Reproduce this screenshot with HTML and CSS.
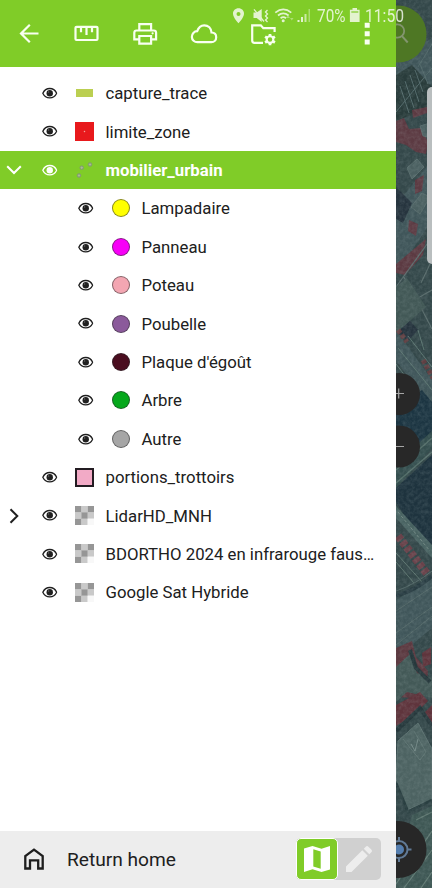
FILE: index.html
```
<!DOCTYPE html>
<html lang="fr">
<head>
<meta charset="utf-8">
<title>Layers</title>
<link rel="stylesheet" href="styles.css">
</head>
<body>
<svg class="defs" width="0" height="0">
  <symbol id="eye" viewBox="0 0 15 12">
    <path d="M.8 6C3.700-.1 11.300-.1 14.200 6 11.300 12.100 3.700 12.100.8 6Z" fill="none" stroke="currentColor" stroke-width="1.300"/>
    <circle cx="7.500" cy="6" r="3.100" fill="currentColor"/>
    <circle cx="6.400" cy="4.800" r=".7" fill="#fff" opacity=".3"/>
  </symbol>
  <symbol id="raster" viewBox="0 0 19 19">
    <path fill="#c9c9c9" d="M6.300 0h6.400v6.300H6.300zM0 6.300h6.300v6.400H0zM12.700 6.300H19v6.400h-6.300zM6.300 12.700h6.400V19H6.300z"/>
    <path fill="#969696" d="M0 0h6.300v6.300H0zM12.700 0H19v6.300h-6.300zM6.300 6.300h6.400v6.400H6.300zM0 12.700h6.300V19H0z"/>
    <path fill="#f8f8f8" d="M12.700 12.700H19V19h-6.300z"/>
  </symbol>
</svg>
<div class="screen">
  <main class="drawer">
    <header class="toolbar">
      <svg viewBox="0 0 396 67" fill="none" stroke="#f8fff0" stroke-width="2.200">
        <path d="M38.500 33.500H21M29.800 24.700 21 33.500l8.800 8.800"/>
        <rect x="75.500" y="26.800" width="22" height="13.200" rx="1"/>
        <path d="M81 27v5.300M86.500 27v8M92 27v5.300"/>
        <path d="M139.300 30.500v-6.300h11.800v6.300M139 39.300h-4.700v-6.500q0-2.300 2.300-2.300h17.200q2.300 0 2.300 2.300v6.500h-4.700M139.300 36h11.800v7.600h-11.800z"/>
        <circle cx="152.600" cy="33.300" r="1.100" fill="#f8fff0" stroke="none"/>
        <path d="M197.500 42.200a5.500 5.500 0 0 1-.3-11c1.200-3.600 3.700-5.900 7-5.900 4.100 0 7 3 7.300 7.200 2.900.1 4.700 2.100 4.700 4.700 0 2.900-2 5-4.900 5z"/>
        <path d="M263 42.800h-8.500q-2.300 0-2.300-2.300V25.300h8.600l2.500 2.900h11.300v3.700"/>
        <circle cx="270" cy="39.600" r="3.300" stroke-width="2.100"/>
        <path stroke-width="2.700" d="M270 36.400v-2.500M270 42.800v2.500M267.200 38l-2.100-1.300M272.800 41.200l2.100 1.300M267.200 41.200l-2.100 1.300M272.800 38l2.100-1.300"/>
        <path fill="#f8fff0" stroke="none" d="M364.700 22.800h5v5h-5zM364.700 31.200h5v5h-5zM364.700 39.600h5v5h-5z"/>
      </svg>
    </header>
    <div class="layers">
      <div class="row"><span class="toggle"></span><svg class="eye"><use href="#eye"/></svg><span class="legend"><i class="line"></i></span><span class="name">capture_trace</span></div>
      <div class="row"><span class="toggle"></span><svg class="eye"><use href="#eye"/></svg><span class="legend"><i class="zone"></i></span><span class="name">limite_zone</span></div>
      <div class="row selected"><span class="toggle"><svg width="16" height="10" viewBox="0 0 16 10"><path d="M1.200 1.200 8 8l6.800-6.800"/></svg></span><svg class="eye"><use href="#eye"/></svg><span class="legend"><svg width="19" height="19" viewBox="0 0 19 19" fill="#a9bf8d" stroke="#7f9378" stroke-width="1"><circle cx="4" cy="14.500" r="1.700"/><circle cx="6.700" cy="6.700" r="1.700"/><circle cx="15" cy="3.500" r="1.700"/></svg></span><span class="name">mobilier_urbain</span></div>
      <div class="row child"><svg class="eye"><use href="#eye"/></svg><span class="legend"><i class="dot lamp"></i></span><span class="name">Lampadaire</span></div>
      <div class="row child"><svg class="eye"><use href="#eye"/></svg><span class="legend"><i class="dot sign"></i></span><span class="name">Panneau</span></div>
      <div class="row child"><svg class="eye"><use href="#eye"/></svg><span class="legend"><i class="dot post"></i></span><span class="name">Poteau</span></div>
      <div class="row child"><svg class="eye"><use href="#eye"/></svg><span class="legend"><i class="dot bin"></i></span><span class="name">Poubelle</span></div>
      <div class="row child"><svg class="eye"><use href="#eye"/></svg><span class="legend"><i class="dot drain"></i></span><span class="name">Plaque d'égoût</span></div>
      <div class="row child"><svg class="eye"><use href="#eye"/></svg><span class="legend"><i class="dot tree"></i></span><span class="name">Arbre</span></div>
      <div class="row child"><svg class="eye"><use href="#eye"/></svg><span class="legend"><i class="dot other"></i></span><span class="name">Autre</span></div>
      <div class="row"><span class="toggle"></span><svg class="eye"><use href="#eye"/></svg><span class="legend"><i class="area"></i></span><span class="name">portions_trottoirs</span></div>
      <div class="row"><span class="toggle"><svg width="10" height="16" viewBox="0 0 10 16"><path d="M1.500 1.200 8.300 8l-6.800 6.800"/></svg></span><svg class="eye"><use href="#eye"/></svg><svg class="raster"><use href="#raster"/></svg><span class="name">LidarHD_MNH</span></div>
      <div class="row"><span class="toggle"></span><svg class="eye"><use href="#eye"/></svg><svg class="raster"><use href="#raster"/></svg><span class="name">BDORTHO 2024 en infrarouge faus…</span></div>
      <div class="row"><span class="toggle"></span><svg class="eye"><use href="#eye"/></svg><svg class="raster"><use href="#raster"/></svg><span class="name">Google Sat Hybride</span></div>
    </div>
    <footer class="bottom">
      <svg class="home" width="20" height="22" viewBox="0 0 20 22" fill="none" stroke="#1e1e1e" stroke-width="2.300"><path d="M1.300 20.500V8L10 1.600 18.700 8v12.500h-4.500v-8.200H6v8.200z"/></svg>
      <span class="return">Return home</span>
      <div class="modes">
        <span class="mode browse"><svg width="26" height="26" viewBox="0 0 26 26"><path fill="#fff" d="M0 2.500 8.500 0l9 2.700L26 0v23.500L17.500 26l-9-2.700L0 26z"/><path fill="#80cc28" d="M9.300 3.200 16.700 5.400v17.400l-7.400-2.200z"/></svg></span>
        <span class="mode edit"><svg width="26" height="26" viewBox="0 0 26 26" fill="#ededed"><path d="M0 26v-5.500L16.300 4.200l5.500 5.500L5.500 26zM17.800 2.700l2-2q1.300-1.300 2.600 0l2.900 2.900q1.300 1.300 0 2.600l-2 2z"/></svg></span>
      </div>
    </footer>
  </main>
  <svg class="map" viewBox="396 0 36 888" fill="none">
    <filter id="grain" x="0" y="0" width="100%" height="100%">
      <feTurbulence type="fractalNoise" baseFrequency=".28" numOctaves="3" seed="4"/>
      <feColorMatrix values="0 0 0 0 .5  0 0 0 0 .6  0 0 0 0 .6  1.500 0 0 0 -.5"/>
    </filter>
    <rect x="396" width="36" height="888" fill="#34484a"/>
    <g class="aerial">
    <path fill="#40565a" d="M396 60 432 38v44l-36 50zM396 205l36-45v60l-36 55zM396 600l36-22v50l-36 30zM396 330l36 50v30l-36-50z"/>
    <path fill="#293c3b" d="M396 75 412 65l20 22v20l-36 14z"/>
    <path stroke="#52696a" stroke-width="1" d="M396 112 432 68M400 86l9 27M405 81l9 27M410 75l9 27M415 70l8 22M420 64l8 20M396 62l18-18M418 67l14-23"/>
    <path fill="#5c3a42" d="M396 121l8-3 5 11 12-1 7 14-2 12-10-2-10-7-10-3zM412 110l15-3v6l-14 5zM409 220l9 4-2 12-8-5zM396 264l30-25-3 16-18 20-9-2zM415 180l9-5-2 16-7 3z"/>
    <path fill="#4b6061" stroke="#5c7070" stroke-width=".8" d="M407 168l10-9 7 8-12 12zM411 207l11-14 8 4-10 17zM420 126l10-3 2 15-9-2z"/>
    <path fill="#26343e" d="M396 187l16 16-9 20-7-4zM396 320l10-4 12 14-10 11-12-9z"/>
    <path stroke="#586b6b" stroke-width="1.200" d="M396 287 430 240M403 276l15 22 14-8M404 286l-6 42M421 283l9-19M417 300l15 29"/>
    <path fill="#425856" d="M407 278l19 29-30 26v-46z"/>
    <path stroke="#603f42" stroke-width="5" stroke-dasharray="4 2" d="M398 330l9 12M423 360l10 18"/>
    <path stroke="#5a746f" stroke-width="1" d="M398 348 432 390M408 336l24 31M396 364l36 47M418 330l6 20"/>
    <path fill="#1c3542" d="M396 410 422 390l10 12v30l-36 48z"/>
    <path fill="#354f4f" d="M396 464 432 431v17l-36 40z"/>
    <path stroke="#546e69" stroke-width="1.500" d="M396 470 432 438M396 483 432 452"/>
    <path fill="#1e333e" d="M396 488 432 455v91l-18-14-18-30z"/>
    <path fill="#486261" d="M396 506 432 545v13l-36-40z"/>
    <path stroke="#718883" stroke-width="1" stroke-dasharray="3 2" d="M398 512 430 551"/>
    <path stroke="#69424a" stroke-width="8" stroke-dasharray="5 2" d="M398 536 428 575"/>
    <path stroke="#5d756f" stroke-width="1" d="M396 553 423 583M396 562l18 21"/>
    <path stroke="#293d43" stroke-width="4" d="M396 596q20-6 36-20"/>
    <path stroke="#526767" stroke-width="1" d="M396 591q20-7 36-20M396 611 432 587M396 633l36-26M396 645 432 616"/>
    <path fill="#5c3940" d="M396 648l16-7 4 16 12 14-2 20-14 7-16-1z"/>
    <path fill="#435957" d="M396 667l14-13 7 19 15 5v20l-25-6-11 10z"/>
    <path fill="#5f343c" d="M396 705l24-13 8 9-13 13-19 12zM422 653l9-6v17l-8 3zM423 714l9-9v20z"/>
    <path stroke="#26383c" stroke-width="4" d="M396 731 420 708 432 726M410 650l6 18 14 14"/>
    <path fill="#4d6362" stroke="#5c7170" stroke-width="1" d="M398 741 418 723 432 749v50l-25 11-11-31z"/>
    <path stroke="#748987" stroke-width="1" d="M411 744l4 7 3-12"/>
    <path stroke="#5f7573" stroke-width="1" d="M403 739l17 21 6-8-12-21"/>
    <path stroke="#2a3f41" stroke-width="3" d="M396 783l12 29 24-12M419 826l13-8"/>
    <path fill="#3e5754" d="M412 815 432 806v82h-36v-12z"/>
    <path stroke="#617a73" stroke-width="1.200" d="M396 884 432 831M404 888l28-38M416 820l16-8M421 888l11-16"/>
    </g>
    <rect x="396" width="36" height="888" filter="url(#grain)" opacity=".18"/>
    <circle cx="398" cy="34" r="28.500" fill="#4e7724"/>
    <circle cx="397.500" cy="31" r="6.700" stroke="#83956f" stroke-width="1.800"/>
    <path stroke="#83956f" stroke-width="2" d="M402 36.200l5.700 6.300"/>
    <rect x="427" y="87" width="14" height="177" rx="5" fill="#b9bebf"/>
    <circle cx="399" cy="394" r="21" fill="#282828"/><circle cx="399" cy="446.500" r="21" fill="#282828"/>
    <path stroke="#a6a6a6" stroke-width="1.200" d="M394 393.500h10M398.700 388.500v10M394 446.500h10"/>
    <circle cx="398" cy="849.500" r="28.500" fill="#272727"/>
    <circle cx="399" cy="849.500" r="8.500" stroke="#617a96" stroke-width="2"/><circle cx="399" cy="849.500" r="5" fill="#557eae"/>
    <path stroke="#617a96" stroke-width="2" d="M407 849.500h4.500M399 841v-4M399 858v4"/>
  </svg>
  <svg class="status" viewBox="0 0 432 30" fill="#fff">
    <path fill-rule="evenodd" d="M238.500 8.200c3.300 0 5.500 2.400 5.500 5.500 0 3.800-5.500 9.500-5.500 9.500s-5.500-5.700-5.500-9.500c0-3.100 2.200-5.500 5.500-5.500zm0 3.700a2 2 0 1 0 0 4 2 2 0 0 0 0-4z"/>
    <path d="M253.500 12.500h3.200l5-3.500v13l-5-4h-3.200z"/>
    <path d="M254 9.300 264 21.500M267.500 10l-2 2 2 2-2 2 2 2-2 2 2 2" stroke="#fff" stroke-width="1.300" fill="none"/>
    <g fill="none" stroke="#fff" stroke-width="1.700"><path d="M275.300 12.600q8-6.500 16 0M278 15.500q5.300-4.200 10.600 0M280.600 18.200q2.700-2 5.400 0"/></g>
    <circle cx="283.200" cy="20.800" r="1.500"/><path opacity=".45" d="m286 18 2-2.500 2 2.500zM290 18h3.500l-1.700 2.500z"/>
    <path d="M297.500 20h2v2h-2zM301 17h2v5h-2z"/><path opacity=".75" d="M304.500 14h2v8h-2z"/><path opacity=".45" d="M308.500 9h1.500v13h-1.500z"/>
    <text x="317" y="21.500" textLength="28.500" lengthAdjust="spacingAndGlyphs">70%</text>
    <path d="M352.500 8h4.500v1.700h2.600V22h-9.700V9.700h2.600z"/><path fill="#80cc28" opacity=".6" d="M351.300 11h7v2h-7z"/>
    <text x="365" y="21.500" textLength="39" lengthAdjust="spacingAndGlyphs">11:50</text>
  </svg>
</div>
</body>
</html>
```
FILE: styles.css
```
* { box-sizing: border-box; }
body { margin: 0; font-family: Roboto, "Liberation Sans", sans-serif; color: #202020; }
.defs { display: block; height: 0; }
.screen { position: relative; display: flex; width: 432px; height: 888px; overflow: hidden; background: #fff; }
.drawer { display: flex; flex-direction: column; width: 396px; height: 888px; background: #fff; }
.toolbar { height: 67px; flex: none; background: #80cc28; }
.toolbar svg { display: block; width: 396px; height: 67px; }
.map { width: 36px; height: 888px; flex: none; }
.aerial { filter: blur(0.4px); }
.status { position: absolute; top: 0; left: 0; width: 432px; height: 30px; opacity: .78; }
.status text { font-size: 18px; }
.layers { flex: 1; padding-top: 7.100px; }
.row { display: flex; align-items: center; height: 38.400px; padding-right: 16px; }
.selected { background: #80cc28; color: #fff; font-weight: 700; }
.toggle { display: flex; justify-content: center; width: 28px; margin-right: 14px; flex: none; }
.toggle svg { fill: none; stroke: currentColor; stroke-width: 2; }
.eye { width: 15.500px; height: 12.400px; margin-right: 17.600px; flex: none; }
.child { padding-left: 78px; }
.legend, .raster { display: flex; align-items: center; justify-content: center; width: 19px; height: 19px; margin-right: 11.400px; flex: none; }
.name { font-size: 16.750px; line-height: 24px; white-space: nowrap; }
.line { width: 17px; height: 8px; background: #bbcf51; }
.zone { width: 19px; height: 19px; background: radial-gradient(circle, #f5a29a 0.500px, #e8191c 1.100px); }
.area { width: 19px; height: 19px; border: 2px solid #231c22; background: #f2aac6; }
.dot { width: 18px; height: 18px; border: 1px solid rgba(40, 40, 40, .55); border-radius: 50%; }
.lamp { background: #ffff00; }
.sign { background: #f700f7; }
.post { background: #f3a6b2; }
.bin { background: #8b5a9b; }
.drain { background: #4a0d1f; }
.tree { background: #06a81c; }
.other { background: #a6a6a6; }
.bottom { display: flex; align-items: center; height: 57.500px; flex: none; padding: 0 15.500px 0 23.500px; background: #ededed; }
.home { margin-right: 23.500px; }
.return { flex: 1; font-size: 19.150px; }
.modes { display: flex; border-radius: 5px; background: #d0d0d0; }
.mode { display: flex; align-items: center; justify-content: center; width: 42px; height: 42px; }
.browse { border: 1px solid #fff; border-radius: 5px; background: #80cc28; }
.edit { width: 43px; }
```
